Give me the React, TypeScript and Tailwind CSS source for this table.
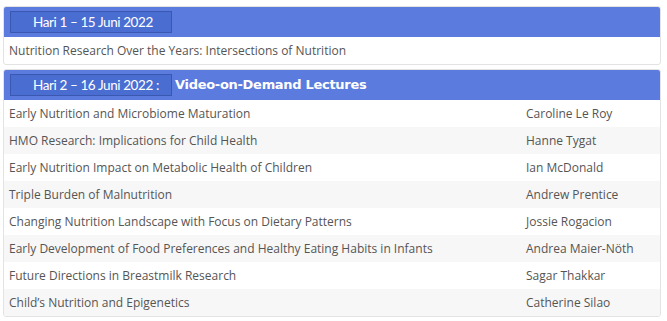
import React from 'react';

const lectures = [
  { title: 'Early Nutrition and Microbiome Maturation', speaker: 'Caroline Le Roy' },
  { title: 'HMO Research: Implications for Child Health', speaker: 'Hanne Tygat' },
  { title: 'Early Nutrition Impact on Metabolic Health of Children', speaker: 'Ian McDonald' },
  { title: 'Triple Burden of Malnutrition', speaker: 'Andrew Prentice' },
  { title: 'Changing Nutrition Landscape with Focus on Dietary Patterns', speaker: 'Jossie Rogacion' },
  { title: 'Early Development of Food Preferences and Healthy Eating Habits in Infants', speaker: 'Andrea Maier-Nöth' },
  { title: 'Future Directions in Breastmilk Research', speaker: 'Sagar Thakkar' },
  { title: "Child’s Nutrition and Epigenetics", speaker: 'Catherine Silao' },
];

const DayBadge: React.FC<{ children: React.ReactNode }> = ({ children }) => (
  <div className="w-[162px] h-[22px] bg-[#4a6dd2] border border-[#3a58b0] flex items-center pl-[22px] text-white text-[13.5px] font-['Lato',sans-serif] tracking-[-0.4px]">
    {children}
  </div>
);

export default function App() {
  return (
    <div className="w-[667px] h-[321px] bg-white pt-[6px] pl-[3px] pr-[6px] font-['Open_Sans',sans-serif]">
      <div className="border border-[#e3e3e3] rounded-[3px] overflow-hidden">
        <div className="h-[30px] bg-[#5b7bde] flex items-center pl-[6px]">
          <DayBadge>Hari 1 – 15 Juni 2022</DayBadge>
        </div>
        <div className="h-[27px] flex items-center px-[5px] text-[12px] text-[#555]">
          Nutrition Research Over the Years: Intersections of Nutrition
        </div>
      </div>

      <div className="mt-[4px] border border-[#e3e3e3] rounded-[3px] overflow-hidden">
        <div className="h-[30px] bg-[#5b7bde] flex items-center pl-[6px] gap-[3px]">
          <DayBadge>Hari 2 – 16 Juni 2022 :</DayBadge>
          <span className="text-white font-bold text-[13px] font-['DejaVu_Sans',sans-serif] tracking-[-0.3px]">
            Video-on-Demand Lectures
          </span>
        </div>
        {lectures.map((l, i) => (
          <div
            key={l.title}
            className={`h-[27px] flex items-center px-[5px] text-[12px] text-[#555] ${i % 2 === 1 ? 'bg-[#f7f7f7]' : 'bg-white'}`}
          >
            <div className="w-[517px]">{l.title}</div>
            <div>{l.speaker}</div>
          </div>
        ))}
      </div>
    </div>
  );
}
